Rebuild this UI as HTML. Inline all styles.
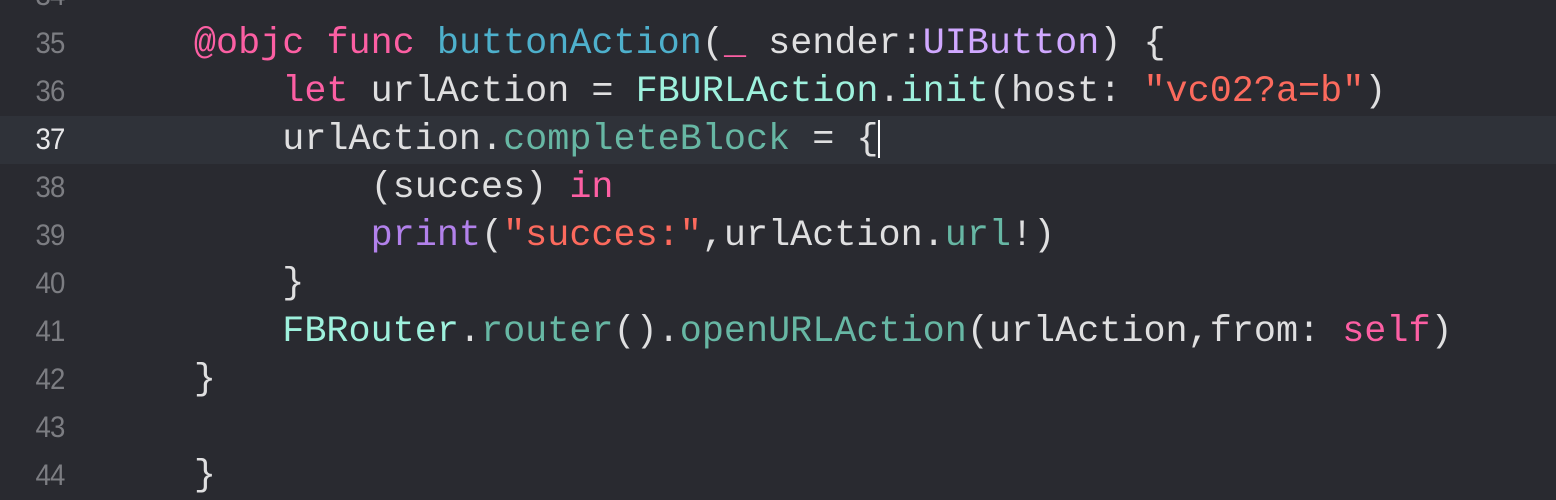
<!DOCTYPE html>
<html><head><meta charset="utf-8"><style>
html,body{margin:0;padding:0}
body{width:1556px;height:460px;background:#292a30;overflow:hidden;position:relative}
.l{position:absolute;left:0;width:1556px;height:48px;line-height:48px}
.cur{background:#2f3239}
.n{position:absolute;right:1492px;font-family:"Liberation Sans",sans-serif;font-size:30px;color:#7c7d82;letter-spacing:-1px;transform:scaleX(0.92);transform-origin:right}
.cur .n{color:#e8e8ea}
.c{position:absolute;left:105.6px;font-family:"Liberation Mono",monospace;font-size:36.8px;color:#dfdfe0;white-space:pre}
.k{color:#fc5fa3}.s{color:#fc6a5d}.t{color:#d0a8ff}.p{color:#9ef1dd}.m{color:#67b7a4}.d{color:#4eb0cc}.f{color:#b281eb}
.caret{display:inline-block;width:2px;height:38px;background:#fff;vertical-align:middle}
</style></head><body>
<div class="l" style="top:-28px"><span class="n">34</span></div>
<div class="l" style="top:20px"><span class="n">35</span><span class="c">    <span class="k">@objc</span> <span class="k">func</span> <span class="d">buttonAction</span>(<span class="k">_</span> sender:<span class="t">UIButton</span>) {</span></div>
<div class="l" style="top:68px"><span class="n">36</span><span class="c">        <span class="k">let</span> urlAction = <span class="p">FBURLAction</span>.<span class="p">init</span>(host: <span class="s">"vc02?a=b"</span>)</span></div>
<div class="l cur" style="top:116px"><span class="n">37</span><span class="c">        urlAction.<span class="m">completeBlock</span> = {<span class="caret"></span></span></div>
<div class="l" style="top:164px"><span class="n">38</span><span class="c">            (succes) <span class="k">in</span></span></div>
<div class="l" style="top:212px"><span class="n">39</span><span class="c">            <span class="f">print</span>(<span class="s">"succes:"</span>,urlAction.<span class="m">url</span>!)</span></div>
<div class="l" style="top:260px"><span class="n">40</span><span class="c">        }</span></div>
<div class="l" style="top:308px"><span class="n">41</span><span class="c">        <span class="p">FBRouter</span>.<span class="m">router</span>().<span class="m">openURLAction</span>(urlAction,from: <span class="k">self</span>)</span></div>
<div class="l" style="top:356px"><span class="n">42</span><span class="c">    }</span></div>
<div class="l" style="top:404px"><span class="n">43</span><span class="c"></span></div>
<div class="l" style="top:452px"><span class="n">44</span><span class="c">    }</span></div>
</body></html>
